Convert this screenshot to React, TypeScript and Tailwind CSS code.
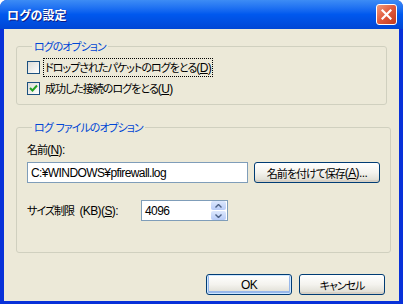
const base = "font-['Liberation_Sans','Noto_Sans_CJK_JP',sans-serif] tracking-[-0.6px]";

// Japanese runs: Noto CJK with proportional kana, squeezed to MS UI Gothic widths
const J = ({children}: {children: React.ReactNode}) => (
  <span className="font-['Noto_Sans_CJK_JP',sans-serif] text-[11px] tracking-[-1px] [font-feature-settings:'palt']">
    {children}
  </span>
);

const CheckBox = ({checked}: {checked?: boolean}) => (
  <span className="flex h-[13px] w-[13px] shrink-0 items-center justify-center border border-[#1c5180] bg-gradient-to-br from-[#dcdcd7] to-white">
    {checked && (
      <svg width="9" height="9" viewBox="0 0 9 9">
        <path d="M1 4 L3.5 6.5 L8 1.5" fill="none" stroke="#21a121" strokeWidth="2" />
      </svg>
    )}
  </span>
);

const XpButton = ({
  children,
  width,
  isDefault,
}: {
  children: React.ReactNode;
  width: string;
  isDefault?: boolean;
}) => (
  <button
    className={`flex h-[21px] ${width} items-center justify-center rounded-[3px] border border-[#003c74] bg-gradient-to-b from-white via-[#f4f3ee] to-[#dcdad0] text-[12px] text-black ${
      isDefault ? 'shadow-[inset_0_0_0_1px_#cee7ff,inset_0_-1px_0_2px_#98b8ea]' : 'shadow-[inset_0_-2px_0_#d6d0c5]'
    }`}
  >
    {children}
  </button>
);

export default function App() {
  return (
    <div className={`${base} flex h-[304px] w-[403px] flex-col overflow-hidden rounded-t-[7px] bg-[#0831d9]`}>
      {/* title bar */}
      <div className="flex h-[29px] shrink-0 items-center justify-between bg-gradient-to-b from-[#3d8cf5] via-[#0058ee] to-[#0046d5] pl-[7px] pr-[6px]">
        <span className="font-['Noto_Sans_CJK_JP',sans-serif] text-[12px] font-bold tracking-normal text-white [font-feature-settings:'palt'] [text-shadow:1px_1px_#0a1883]">
          ログの設定
        </span>
        <span className="flex h-[21px] w-[21px] items-center justify-center rounded-[3px] border border-white bg-gradient-to-br from-[#f09a7c] via-[#e0583b] to-[#c23a1c]">
          <svg width="11" height="11" viewBox="0 0 11 11">
            <path d="M1.5 1.5 L9.5 9.5 M9.5 1.5 L1.5 9.5" stroke="white" strokeWidth="2.2" strokeLinecap="square" />
          </svg>
        </span>
      </div>

      {/* body */}
      <div className="mx-[4px] mb-[3px] flex flex-1 flex-col bg-[#ece9d8] px-3 pt-[9px] text-[12px] leading-[16px] text-black">
        <fieldset className="rounded-[3px] border border-[#d0d0bf] px-[10px] pb-[7px] pt-[4px]">
          <legend className="ml-[5px] px-[2px] text-[#0046d5]">
            <J>ログのオプション</J>
          </legend>
          <div className="flex flex-col gap-[4px]">
            <div className="flex h-[17px] items-center">
              <CheckBox />
              <span className="ml-[3px] border border-dotted border-black px-[1px]">
                <J>ドロップされたパケットのログをとる</J>(<u>D</u>)
              </span>
            </div>
            <div className="flex h-[17px] items-center">
              <CheckBox checked />
              <span className="ml-[4px] px-[1px]">
                <J>成功した接続のログをとる</J>(<u>U</u>)
              </span>
            </div>
          </div>
        </fieldset>

        <fieldset className="mt-[14px] rounded-[3px] border border-[#d0d0bf] px-[10px] pb-[31px] pt-[5px]">
          <legend className="ml-[5px] px-[2px] text-[#0046d5]">
            <J>ログ&nbsp;&nbsp;ファイルのオプション</J>
          </legend>
          <div>
            <J>名前</J>(<u>N</u>):
          </div>
          <div className="mt-[4px] flex items-center gap-[6px]">
            <div className="flex h-[21px] w-[221px] items-center border border-[#7f9db9] bg-white px-[3px]">
              C:¥WINDOWS¥pfirewall.log
            </div>
            <XpButton width="w-[126px]">
              <J>名前を付けて保存</J>(<u>A</u>)...
            </XpButton>
          </div>
          <div className="mt-[17px] flex items-center">
            <span className="w-[114px]">
              <J>サイズ制限</J>&nbsp; (KB)(<u>S</u>):
            </span>
            <div className="flex h-[21px] w-[87px] items-center justify-between border border-[#7f9db9] bg-white pl-[3px] pr-px">
              <span>4096</span>
              <div className="flex h-[19px] w-[15px] flex-col gap-px">
                <span className="flex flex-1 items-center justify-center rounded-[2px] bg-gradient-to-b from-[#dde8fd] to-[#b7cbf7]">
                  <svg width="7" height="4" viewBox="0 0 7 4">
                    <path d="M0.5 3.5 L3.5 0.5 L6.5 3.5" fill="none" stroke="#4d6185" strokeWidth="1.4" />
                  </svg>
                </span>
                <span className="flex flex-1 items-center justify-center rounded-[2px] bg-gradient-to-b from-[#dde8fd] to-[#b7cbf7]">
                  <svg width="7" height="4" viewBox="0 0 7 4">
                    <path d="M0.5 0.5 L3.5 3.5 L6.5 0.5" fill="none" stroke="#4d6185" strokeWidth="1.4" />
                  </svg>
                </span>
              </div>
            </div>
          </div>
        </fieldset>

        <div className="mt-auto mb-[6px] flex justify-end gap-[7px] pr-[2px]">
          <XpButton width="w-[86px]" isDefault>
            OK
          </XpButton>
          <XpButton width="w-[86px]">
            <J>キャンセル</J>
          </XpButton>
        </div>
      </div>
    </div>
  );
}
